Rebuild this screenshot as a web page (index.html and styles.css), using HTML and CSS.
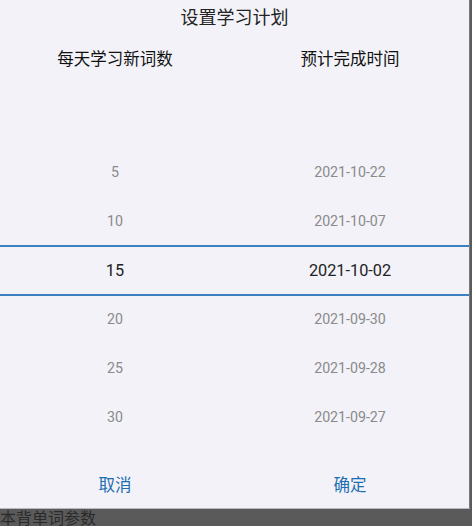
FILE: index.html
```html
<!DOCTYPE html>
<html lang="zh">
<head>
<meta charset="utf-8">
<title>设置学习计划</title>
<link rel="stylesheet" href="styles.css">
</head>
<body>
<div class="dialog">
  <div class="title">设置学习计划</div>
  <div class="cols head">
    <div class="cell">每天学习新词数</div>
    <div class="cell">预计完成时间</div>
  </div>
  <div class="picker">
    <div class="cols row"><div class="cell"></div><div class="cell"></div></div>
    <div class="cols row"><div class="cell">5</div><div class="cell">2021-10-22</div></div>
    <div class="cols row"><div class="cell">10</div><div class="cell">2021-10-07</div></div>
    <div class="cols row selected"><div class="cell">15</div><div class="cell">2021-10-02</div></div>
    <div class="cols row"><div class="cell">20</div><div class="cell">2021-09-30</div></div>
    <div class="cols row"><div class="cell">25</div><div class="cell">2021-09-28</div></div>
    <div class="cols row"><div class="cell">30</div><div class="cell">2021-09-27</div></div>
  </div>
  <div class="cols actions">
    <div class="cell btn">取消</div>
    <div class="cell btn">确定</div>
  </div>
</div>
<div class="under">本背单词参数</div>
</body>
</html>
```

FILE: styles.css
```css
html, body {
  margin: 0;
  padding: 0;
}
body {
  background: #5a5a5a;
  font-family: Roboto, "Noto Sans CJK SC", sans-serif;
  width: 472px;
  height: 526px;
  overflow: hidden;
}
.dialog {
  width: 469px;
  height: 508px;
  background: #f2f2f8;
  border-right: 1px solid #7a7a7a;
  border-bottom: 1px solid #b9b9bd;
  display: flex;
  flex-direction: column;
}
.title {
  height: 36px;
  line-height: 36px;
  text-align: center;
  font-size: 18px;
  color: #222;
}
.cols {
  display: grid;
  grid-template-columns: 230px 230px;
  column-gap: 5px;
}
.cell {
  text-align: center;
}
.head {
  height: 48px;
  line-height: 48px;
  font-size: 16.5px;
  color: #111;
}
.picker {
  margin-top: 15px;
  display: flex;
  flex-direction: column;
}
.row {
  height: 49px;
  line-height: 49px;
  font-size: 14.2px;
  color: #8a8a8a;
}
.row.selected {
  box-sizing: border-box;
  height: 51px;
  margin: -1px 0;
  line-height: 47px;
  border-top: 2px solid #3b80c0;
  border-bottom: 2px solid #3b80c0;
  font-size: 16.3px;
  color: #222;
}
.actions {
  padding-top: 21px;
  height: 46px;
  line-height: 46px;
}
.btn {
  font-size: 16.5px;
  color: #1c6db2;
}
.under {
  font-size: 16px;
  line-height: 19px;
  color: #2a2a2a;
  white-space: nowrap;
}
```
